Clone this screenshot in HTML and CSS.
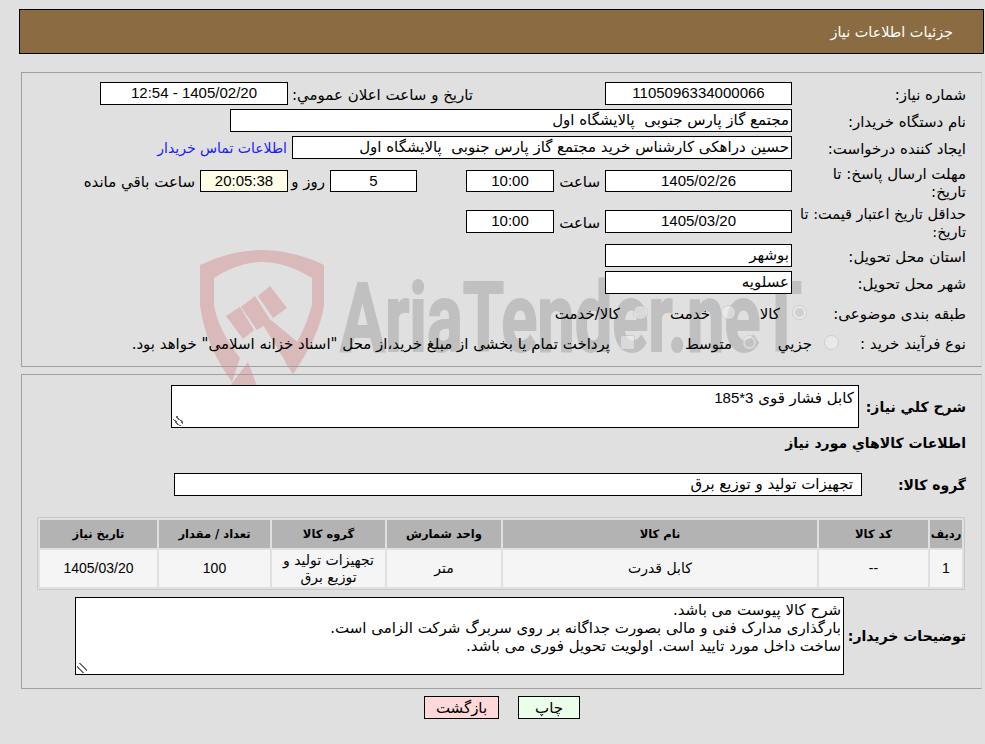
FILE: index.html
```html
<!DOCTYPE html>
<html lang="fa" dir="rtl">
<head>
<meta charset="utf-8">
<title>جزئیات اطلاعات نیاز</title>
<link rel="stylesheet" href="styles.css">
</head>
<body>
<svg class="watermark" viewBox="0 0 985 744" width="985" height="744" aria-hidden="true">
  <g fill="#d9b9b9">
    <path d="M200 265Q232 250 262 250Q292 250 324 265V305Q320 335 293 374L285 362Q304 335 312 305V278Q286 262 262 262Q238 262 214 278V305Q218 330 240 358L232 382Q205 345 200 305Z"/>
    <path d="M226 316L240 307L254 330L243 339Z"/>
    <path d="M241 307L255 296L271 321L257 330Z"/>
    <path d="M258 296L270 286L287 308L273 318Z"/>
    <path d="M262 323L271 320L301 345L293 374Z"/>
    <path d="M248 362L257 386L230 386Z"/>
  </g>
  <text class="wm-text" x="340" y="351" textLength="462" lengthAdjust="spacingAndGlyphs">AriaTender.neT</text>
</svg>
<main class="page">
  <header class="title-bar"><h1 class="title">جزئیات اطلاعات نیاز</h1></header>

  <section class="panel panel-main">
    <div class="row">
      <span class="label">شماره نیاز:</span>
      <span class="box w187 center num">1105096334000066</span>
      <span class="label-announce">تاریخ و ساعت اعلان عمومي:</span>
      <span class="box w188 center num">1405/02/20 - 12:54</span>
    </div>
    <div class="row">
      <span class="label">نام دستگاه خریدار:</span>
      <span class="box w562 text">مجتمع گاز پارس جنوبی &nbsp;پالایشگاه اول</span>
    </div>
    <div class="row">
      <span class="label">ایجاد کننده درخواست:</span>
      <span class="box w500 text">حسین دراهکی کارشناس خرید مجتمع گاز پارس جنوبی &nbsp;پالایشگاه اول</span>
      <a class="contact" href="#">اطلاعات تماس خریدار</a>
    </div>
    <div class="row row-deadline">
      <span class="label">مهلت ارسال پاسخ: تا<br>تاریخ:</span>
      <span class="box w187 h22 center num">1405/02/26</span>
      <span class="hour">ساعت</span>
      <span class="box w88 h22 center num">10:00</span>
      <span class="box w87 h22 center num days">5</span>
      <span class="days-label">روز و</span>
      <span class="box w88 h22 center num remain">20:05:38</span>
      <span class="remain-label">ساعت باقي مانده</span>
    </div>
    <div class="row row-validity">
      <span class="label label-tight">حداقل تاریخ اعتبار قیمت: تا<br>تاریخ:</span>
      <span class="box w187 center num">1405/03/20</span>
      <span class="hour">ساعت</span>
      <span class="box w88 center num">10:00</span>
    </div>
    <div class="row">
      <span class="label">استان محل تحویل:</span>
      <span class="box w187 text">بوشهر</span>
    </div>
    <div class="row">
      <span class="label">شهر محل تحویل:</span>
      <span class="box w187 text">عسلویه</span>
    </div>
    <div class="row row-options row-category">
      <span class="label label-category">طبقه بندی موضوعی:</span>
      <input class="radio" type="radio" name="cat" checked disabled>
      <span class="opt opt-kala">کالا</span>
      <input class="radio" type="radio" name="cat" disabled>
      <span class="opt opt-service">خدمت</span>
      <input class="radio" type="radio" name="cat" disabled>
      <span class="opt opt-both">کالا/خدمت</span>
    </div>
    <div class="row row-options row-process">
      <span class="label label-process">نوع فرآیند خرید :</span>
      <input class="radio" type="radio" name="proc" disabled>
      <span class="opt opt-small">جزیي</span>
      <input class="radio" type="radio" name="proc" checked disabled>
      <span class="opt opt-medium">متوسط</span>
      <input class="radio" type="checkbox" disabled>
      <span class="opt opt-note">پرداخت تمام یا بخشی از مبلغ خرید،از محل "اسناد خزانه اسلامی" خواهد بود.</span>
    </div>
  </section>

  <section class="panel panel-items">
    <div class="row row-summary">
      <span class="label-bold label-summary">شرح کلي نیاز:</span>
      <div class="area area-summary">کابل فشار قوی <span class="num">3*185</span><i class="grip"></i></div>
    </div>
    <h2 class="items-heading">اطلاعات کالاهاي مورد نیاز</h2>
    <div class="row row-group">
      <span class="label-bold label-group">گروه کالا:</span>
      <span class="box w688 text text-group">تجهیزات تولید و توزیع برق</span>
    </div>
    <table class="items">
      <thead>
        <tr>
          <th class="c-index">ردیف</th>
          <th class="c-code">کد کالا</th>
          <th class="c-name">نام کالا</th>
          <th class="c-unit">واحد شمارش</th>
          <th class="c-group">گروه کالا</th>
          <th class="c-qty">تعداد / مقدار</th>
          <th>تاریخ نیاز</th>
        </tr>
      </thead>
      <tbody>
        <tr>
          <td class="num">1</td>
          <td class="num">--</td>
          <td>کابل قدرت</td>
          <td>متر</td>
          <td>تجهیزات تولید و توزیع برق</td>
          <td class="num">100</td>
          <td class="num">1405/03/20</td>
        </tr>
      </tbody>
    </table>
    <div class="row row-notes">
      <span class="label-bold label-notes">توضیحات خریدار:</span>
      <div class="area area-notes">شرح کالا پیوست می باشد.<br>بارگذاری مدارک فنی و مالی بصورت جداگانه بر روی سربرگ شرکت الزامی است.<br>ساخت داخل مورد تایید است. اولویت تحویل فوری می باشد.<i class="grip"></i></div>
    </div>
  </section>

  <div class="actions">
    <button class="btn btn-print" type="button">چاپ</button>
    <button class="btn btn-back" type="button">بازگشت</button>
  </div>
</main>
</body>
</html>
```
FILE: styles.css
```css
* { box-sizing: border-box; }
html, body { margin: 0; padding: 0; }
body {
  position: relative;
  height: 744px;
  overflow: hidden;
  background: #e0e0e0;
  color: #000;
  font: 15px/18px "DejaVu Sans", sans-serif;
}
.watermark { position: absolute; left: 0; top: 0; z-index: 0; direction: ltr; }
.wm-text { font: 700 97px Roboto, sans-serif; fill: #c0c0c0; stroke: #c0c0c0; stroke-width: 2px; }
.page { position: relative; z-index: 1; padding: 9px 1px 0 19px; }
.title-bar {
  display: flex;
  align-items: center;
  height: 45px;
  padding: 0 30px 0 0;
  margin-bottom: 18px;
  background: #8b6b41;
  border: 1px solid #000;
}
.title { margin: 0; font-size: 14.4px; font-weight: 400; color: #fff; }
.panel {
  margin: 0 2px 7px 2px;
  border: 1px solid #a0a0a0;
  border-right-color: #d4d4d4;
}
.panel-main { height: 295px; padding: 9px 15px 0 0; }
.panel-items { height: 315px; padding: 10px 15px 0 0; }
.row { display: flex; align-items: center; margin-bottom: 4px; height: 23px; }
.label { width: 174px; flex: none; padding-top: 3px; }
.label-tight { font-size: 14.5px; }
.box {
  display: block;
  height: 23px;
  flex: none;
  background: #fff;
  border: 1px solid #000;
  line-height: 20px;
  white-space: nowrap;
  overflow: hidden;
}
.h22 { height: 22px; }
.center { text-align: center; }
.text { padding-right: 2px; }
.num { font-family: "Liberation Sans", sans-serif; font-size: 15px; }
.w87 { width: 87px; }
.w88 { width: 88px; }
.w187 { width: 187px; }
.w188 { width: 188px; }
.w500 { width: 500px; }
.w562 { width: 562px; }
.w688 { width: 688px; }
.label-announce { width: 185px; margin-right: 132px; flex: none; padding-top: 3px; white-space: nowrap; }
.contact { margin-right: 5px; color: #1a1aff; font-size: 14px; text-decoration: none; white-space: nowrap; }
.row-deadline { margin-top: 11px; margin-bottom: 18px; height: 22px; }
.row-validity { margin-bottom: 11px; }
.hour { width: 51px; padding-right: 5px; padding-top: 2px; flex: none; }
.days { margin-right: 49px; }
.days-label { width: 42px; padding-right: 5px; padding-top: 2px; flex: none; white-space: nowrap; }
.remain { background: #ffffe8; }
.remain-label { padding-right: 5px; padding-top: 2px; white-space: nowrap; }
.row-options { height: 18px; }
.row-category { margin-top: 9px; margin-bottom: 12px; }
.label-category { width: 159px; }
.label-process { width: 127px; }
.radio { width: 15px; height: 15px; margin: 0; flex: none; opacity: .7; }
.opt { flex: none; white-space: nowrap; padding-top: 4px; }
.opt-kala { width: 56px; padding-right: 12px; }
.opt-service { width: 73px; padding-right: 11px; }
.opt-both { padding-right: 13px; }
.opt-small { width: 67px; padding-right: 12px; }
.opt-medium { width: 107px; padding-right: 10px; }
.opt-note { padding-right: 10px; }
.label-bold { flex: none; font-size: 14px; font-weight: 700; }
.label-summary { width: 107px; }
.area {
  position: relative;
  flex: none;
  background: #fff;
  border: 1px solid #000;
  padding: 3px 2px 0 0;
  line-height: 18px;
}
.area-summary { width: 688px; height: 43px; padding-right: 4px; }
.row-summary { height: 43px; margin-bottom: 0; }
.grip {
  position: absolute;
  left: 1px;
  bottom: 1px;
  width: 10px;
  height: 10px;
  background: linear-gradient(45deg, transparent 30%, #666 30%, #666 40%, transparent 40%, transparent 60%, #666 60%, #666 70%, transparent 70%);
}
.items-heading { margin: 5px 0 20px; font-size: 14px; font-weight: 700; line-height: 20px; }
.label-group { width: 104px; }
.row-group { margin-bottom: 21px; }
.text-group { padding-right: 8px; }
.items {
  width: 928px;
  margin-right: 1px;
  table-layout: fixed;
  border: 1px solid #c8c8c8;
  border-spacing: 2px;
  font-size: 14px;
}
.items th { height: 28px; padding: 0; background: #b3b3b3; font-size: 11.5px; font-weight: 700; }
.items td { height: 37px; padding: 0; background: #f5f5f5; text-align: center; line-height: 17px; }
.items td.num { font-size: 14px; }
.c-index { width: 32px; }
.c-code { width: 109px; }
.c-name { width: 314px; }
.c-unit { width: 114px; }
.c-group { width: 113px; }
.c-qty { width: 111px; }
.row-notes { height: 78px; margin-top: 7px; }
.label-notes { width: 122px; }
.area-notes { width: 769px; height: 78px; padding-top: 3px; }
.actions { display: flex; justify-content: center; gap: 19px; margin-top: 3px; padding-left: 1px; }
.btn {
  height: 23px;
  padding: 0;
  border: 1px solid #000;
  font: 15px/18px "DejaVu Sans", sans-serif;
  color: #000;
}
.btn-print { width: 62px; background: #eaffea; }
.btn-back { width: 75px; background: #ffd9d9; }
```
